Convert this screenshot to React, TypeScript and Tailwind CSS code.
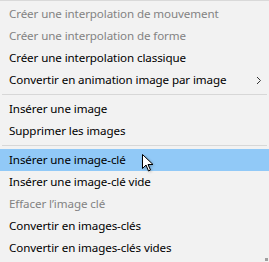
import React from 'react';

type Item = { label: string; disabled?: boolean; active?: boolean; sub?: boolean } | 'sep';

const items: Item[] = [
  { label: 'Créer une interpolation de mouvement', disabled: true },
  { label: 'Créer une interpolation de forme', disabled: true },
  { label: 'Créer une interpolation classique' },
  { label: 'Convertir en animation image par image', sub: true },
  'sep',
  { label: 'Insérer une image' },
  { label: 'Supprimer les images' },
  'sep',
  { label: 'Insérer une image-clé', active: true },
  { label: 'Insérer une image-clé vide' },
  { label: 'Effacer l’image clé', disabled: true },
  { label: 'Convertir en images-clés' },
  { label: 'Convertir en images-clés vides' },
];

export default function App() {
  return (
    <div
      className="relative w-[269px] h-[262px] bg-[#f2f2f2] border-t border-[#d9d9d9] pt-[2px] overflow-hidden text-[11.6px] tracking-[-0.1px]"
      style={{ fontFamily: '"Noto Sans", "Open Sans", sans-serif' }}
    >
      {items.map((it, i) =>
        it === 'sep' ? (
          <div key={i} className="h-[7px] flex items-center pl-[2px] pr-[2px]">
            <div className="h-px w-full bg-[#d7d7d7]" />
          </div>
        ) : (
          <div
            key={i}
            className={`h-[22px] flex items-center pl-[9px] pr-[6px] ${it.active ? 'bg-[#91c9f7]' : ''} ${
              it.disabled ? 'text-[#838383]' : 'text-black'
            }`}
          >
            <span className="flex-1 whitespace-nowrap">{it.label}</span>
            {it.sub && (
              <svg width="6" height="9" viewBox="0 0 6 9" className="mr-[1px]">
                <path d="M1 1 L4.5 4.5 L1 8" fill="none" stroke="#333" strokeWidth="1" />
              </svg>
            )}
          </div>
        )
      )}
      <svg className="absolute left-[141px] top-[152px]" width="16" height="22" viewBox="0 0 16 22">
        <defs>
          <filter id="sh" x="-50%" y="-50%" width="200%" height="200%">
            <feGaussianBlur stdDeviation="1.5" />
          </filter>
        </defs>
        <path d="M2.5 2.5 V16.5 L6 13 L8.5 19 L10.5 18 L8 12.5 H13 Z" fill="#000" opacity="0.35" filter="url(#sh)" />
        <path d="M1.5 1.5 V15.5 L5 12 L7.5 18 L9.5 17 L7 11.5 H12 Z" fill="#fff" stroke="#000" strokeWidth="1" />
      </svg>
      <div className="absolute right-[1px] bottom-[1px] w-[3px] h-[3px] bg-[#a0a0a0]" />
    </div>
  );
}
